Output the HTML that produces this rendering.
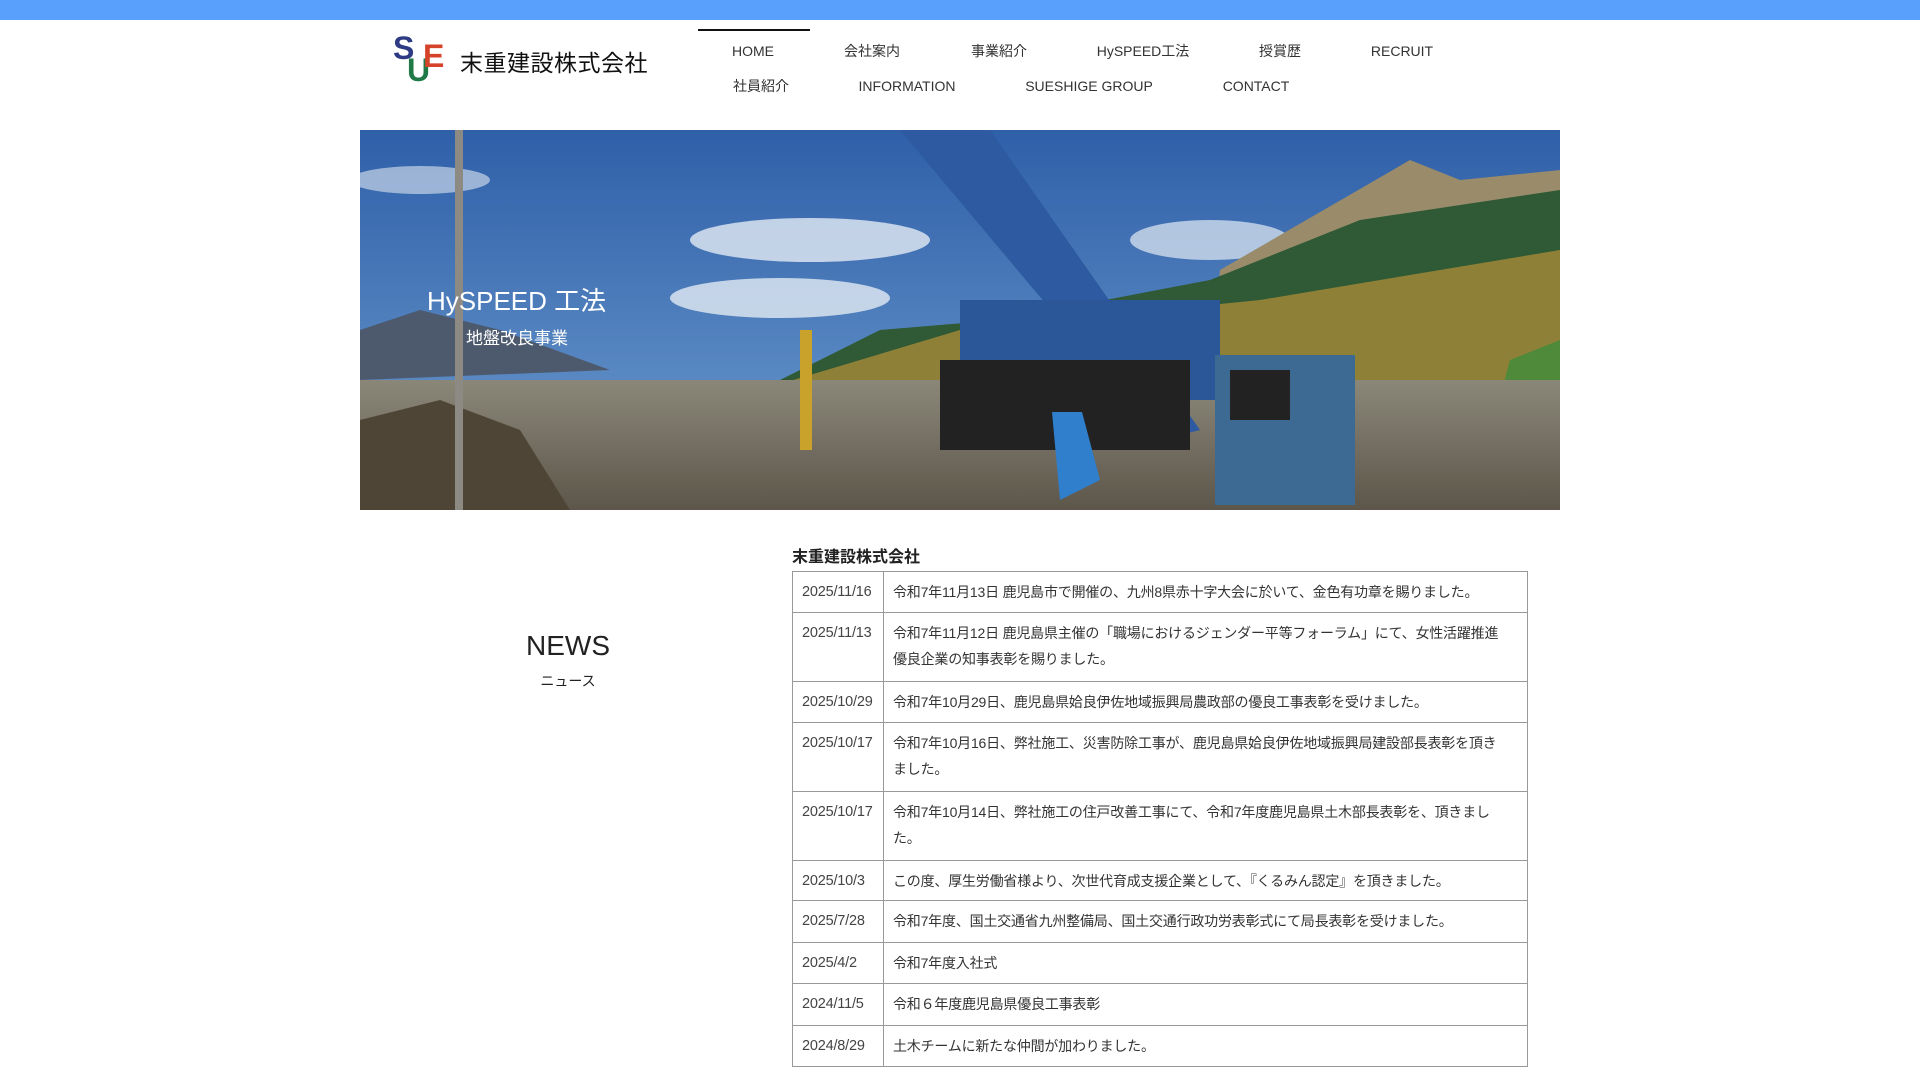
<!DOCTYPE html>
<html><head><meta charset="utf-8"><style>
body{margin:0;width:1920px;height:1080px;overflow:hidden;background:#fff;font-family:"Liberation Sans","Noto Sans CJK JP",sans-serif;color:#333}
.bar{position:absolute;left:0;top:0;width:1920px;height:20px;background:#58a0fb}
.nav a{position:absolute;font-size:14px;line-height:20px;height:20px;color:#333;text-decoration:none;transform:translateX(-50%);white-space:nowrap}
table{position:absolute;left:792px;top:571px;width:736px;border-collapse:collapse;font-size:14px;letter-spacing:-0.2px}
td{border:1px solid #999;padding:0 9px;vertical-align:top;line-height:26px;white-space:nowrap;overflow:hidden}
td.d{width:72px;color:#444;font-size:14.5px}
</style></head><body>
<div class="bar"></div>
<div style="position:absolute;left:393px;top:34px;width:60px;height:56px;font-weight:bold;font-family:'Liberation Sans',sans-serif">
<span style="position:absolute;left:0;top:-4px;font-size:32px;color:#2e3a84">S</span>
<span style="position:absolute;left:14px;top:18px;font-size:32px;color:#1f7a48">U</span>
<span style="position:absolute;left:30px;top:4px;font-size:32px;color:#d5432a">E</span>
</div>
<div style="position:absolute;left:460px;top:44px;font-size:23px;color:#111;letter-spacing:0.5px">末重建設株式会社</div>
<div style="position:absolute;left:698px;top:29px;width:112px;height:2px;background:#111"></div>
<div class="nav">
<a style="left:753px;top:41px">HOME</a>
<a style="left:872px;top:41px">会社案内</a>
<a style="left:999px;top:41px">事業紹介</a>
<a style="left:1143px;top:41px">HySPEED工法</a>
<a style="left:1280px;top:41px">授賞歴</a>
<a style="left:1402px;top:41px">RECRUIT</a>
<a style="left:761px;top:76px">社員紹介</a>
<a style="left:907px;top:76px">INFORMATION</a>
<a style="left:1089px;top:76px">SUESHIGE GROUP</a>
<a style="left:1256px;top:76px">CONTACT</a>
</div>
<svg style="position:absolute;left:360px;top:130px" width="1200" height="380">
<defs><linearGradient id="sky" x1="0" y1="0" x2="0" y2="1"><stop offset="0" stop-color="#2f5fa8"/><stop offset="1" stop-color="#6f9ed0"/></linearGradient>
<linearGradient id="gr" x1="0" y1="0" x2="0" y2="1"><stop offset="0" stop-color="#8a8779"/><stop offset="1" stop-color="#5d564a"/></linearGradient></defs>
<rect width="1200" height="380" fill="url(#sky)"/>
<ellipse cx="450" cy="110" rx="120" ry="22" fill="#e3ebf4" opacity=".8"/>
<ellipse cx="420" cy="168" rx="110" ry="20" fill="#e3ebf4" opacity=".8"/>
<ellipse cx="850" cy="110" rx="80" ry="20" fill="#e3ebf4" opacity=".7"/>
<ellipse cx="60" cy="50" rx="70" ry="14" fill="#dfe8f2" opacity=".6"/>
<path d="M0 200 L60 180 L140 200 L250 240 L0 250Z" fill="#4d5a6e"/>
<path d="M860 140 L1050 30 L1100 50 L1200 40 L1200 260 L850 260Z" fill="#9a8b6b"/>
<path d="M850 150 L1000 90 L1200 60 L1200 260 L380 270 L520 200 L640 190Z" fill="#2f5a35"/>
<path d="M600 200 L900 170 L1200 120 L1200 260 L400 260Z" fill="#a78a3a" opacity=".8"/>
<path d="M1150 230 L1200 210 L1200 380 L1110 380Z" fill="#4f8a3a"/>
<rect y="250" width="1200" height="130" fill="url(#gr)"/>
<path d="M0 290 L80 270 L160 300 L210 380 L0 380Z" fill="#4e4536"/>
<rect x="95" y="0" width="8" height="380" fill="#8d8a84"/>
<path d="M540 0 L630 0 L840 300 L800 310Z" fill="#2d5aa0"/>
<rect x="600" y="170" width="260" height="100" fill="#2b5799"/>
<rect x="580" y="230" width="250" height="90" fill="#222"/>
<rect x="855" y="225" width="140" height="150" fill="#3d6a93"/>
<rect x="870" y="240" width="60" height="50" fill="#222"/>
<rect x="440" y="200" width="12" height="120" fill="#c9a22c"/>
<path d="M692 282 L722 282 L740 350 L700 370Z" fill="#2f7fcc"/>
<text x="67" y="180" fill="#fff" font-size="26" font-family="Liberation Sans,Noto Sans CJK JP,sans-serif">HySPEED 工法</text>
<text x="106" y="214" fill="#fff" font-size="17" font-family="Liberation Sans,Noto Sans CJK JP,sans-serif">地盤改良事業</text>
</svg>
<div style="position:absolute;left:568px;top:630px;transform:translateX(-50%);font-size:28px;color:#222">NEWS</div>
<div style="position:absolute;left:568px;top:671px;transform:translateX(-50%);font-size:14px;color:#222">ニュース</div>
<div style="position:absolute;left:792px;top:543px;font-size:16px;font-weight:bold;color:#222">末重建設株式会社</div>
<table>
<tr style="height:41px"><td class="d" style="padding-top:7px">2025/11/16</td><td style="padding-top:7px">令和7年11月13日 鹿児島市で開催の、九州8県赤十字大会に於いて、金色有功章を賜りました。</td></tr>
<tr style="height:69px"><td class="d" style="padding-top:7px">2025/11/13</td><td style="padding-top:7px">令和7年11月12日 鹿児島県主催の「職場におけるジェンダー平等フォーラム」にて、女性活躍推進<br>優良企業の知事表彰を賜りました。</td></tr>
<tr style="height:41px"><td class="d" style="padding-top:7px">2025/10/29</td><td style="padding-top:7px">令和7年10月29日、鹿児島県姶良伊佐地域振興局農政部の優良工事表彰を受けました。</td></tr>
<tr style="height:69px"><td class="d" style="padding-top:7px">2025/10/17</td><td style="padding-top:7px">令和7年10月16日、弊社施工、災害防除工事が、鹿児島県姶良伊佐地域振興局建設部長表彰を頂き<br>ました。</td></tr>
<tr style="height:69px"><td class="d" style="padding-top:7px">2025/10/17</td><td style="padding-top:7px">令和7年10月14日、弊社施工の住戸改善工事にて、令和7年度鹿児島県土木部長表彰を、頂きまし<br>た。</td></tr>
<tr style="height:40px"><td class="d" style="padding-top:7px">2025/10/3</td><td style="padding-top:7px">この度、厚生労働省様より、次世代育成支援企業として、『くるみん認定』を頂きました。</td></tr>
<tr style="height:42px"><td class="d" style="padding-top:7px">2025/7/28</td><td style="padding-top:7px">令和7年度、国土交通省九州整備局、国土交通行政功労表彰式にて局長表彰を受けました。</td></tr>
<tr style="height:41px"><td class="d" style="padding-top:7px">2025/4/2</td><td style="padding-top:7px">令和7年度入社式</td></tr>
<tr style="height:42px"><td class="d" style="padding-top:7px">2024/11/5</td><td style="padding-top:7px">令和６年度鹿児島県優良工事表彰</td></tr>
<tr style="height:41px"><td class="d" style="padding-top:7px">2024/8/29</td><td style="padding-top:7px">土木チームに新たな仲間が加わりました。</td></tr>
</table>
</body></html>
